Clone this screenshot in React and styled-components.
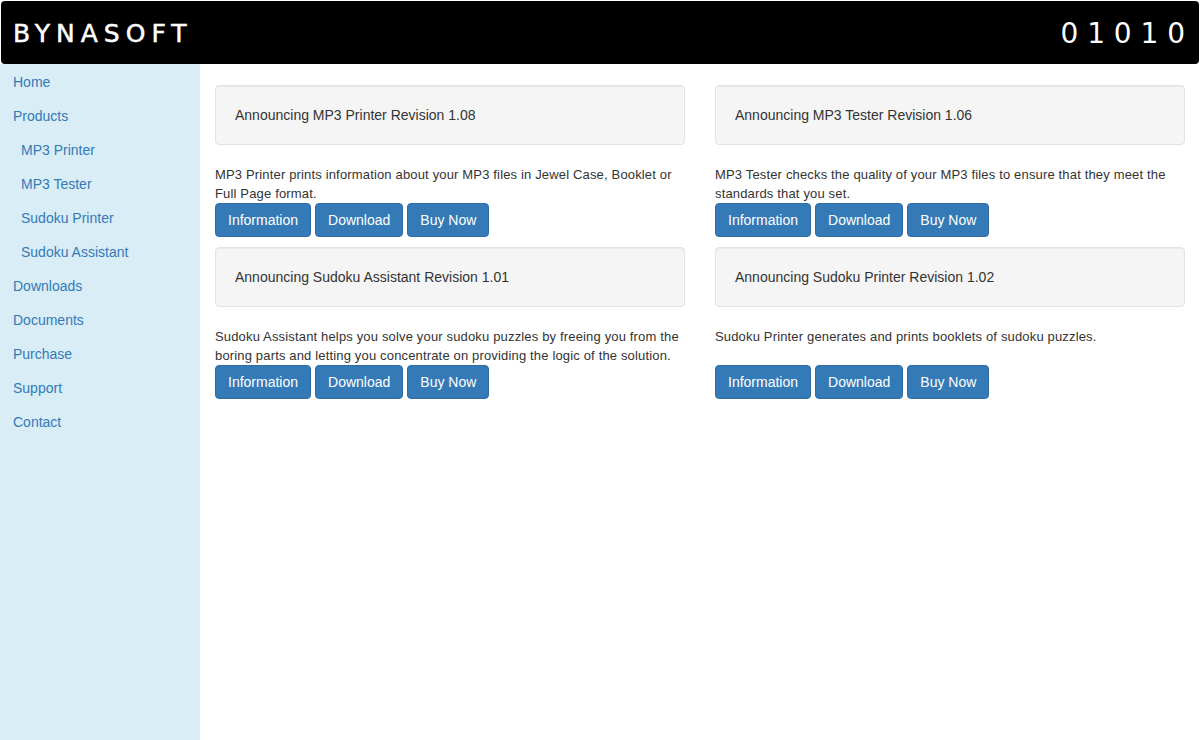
import React from 'react';
import styled, { createGlobalStyle } from 'styled-components';

const GlobalStyle = createGlobalStyle`
  * {
    box-sizing: border-box;
  }
  body {
    margin: 0;
    background-color: #fff;
    color: #333;
    font-family: "Liberation Sans", Arial, sans-serif;
    font-size: 14px;
    line-height: 20px;
  }
`;

const Page = styled.div`
  display: flex;
  flex-direction: column;
  height: 740px;
  overflow: hidden;
`;

const Banner = styled.header`
  display: flex;
  justify-content: space-between;
  align-items: center;
  flex: none;
  height: 63px;
  margin: 1px 1px 0;
  padding: 2px 14px 0 12px;
  background-color: #000;
  border-radius: 4px;
  color: #fff;
`;

const Logo = styled.div`
  font-family: "DejaVu Sans", sans-serif;
  font-size: 25px;
  line-height: 30px;
  letter-spacing: 6px;
  -webkit-text-stroke: 0.5px #fff;
`;

const Binary = styled.div`
  font-family: "DejaVu Sans", sans-serif;
  font-size: 28px;
  line-height: 30px;
  letter-spacing: 8.9px;
  margin-right: -9px;
`;

const Body = styled.div`
  display: flex;
  flex: 1;
  min-height: 0;
`;

const Sidebar = styled.nav`
  flex: none;
  width: 200px;
  background-color: #d9edf7;
  display: flex;
  flex-direction: column;
  padding-top: 1px;
`;

const NavLink = styled.a`
  display: block;
  height: 34px;
  padding: 7px 0 7px ${props => (props.$sub ? '21px' : '13px')};
  color: #337ab7;
  text-decoration: none;
`;

const Content = styled.main`
  flex: 1;
  display: grid;
  grid-template-columns: 470px 470px;
  column-gap: 30px;
  grid-auto-rows: 162px;
  align-content: start;
  padding: 21px 0 0 15px;
`;

const Card = styled.section`
  display: flex;
  flex-direction: column;
`;

const Well = styled.div`
  height: 60px;
  padding: 19px;
  margin-bottom: 19px;
  background-color: #f5f5f5;
  border: 1px solid #e3e3e3;
  border-radius: 4px;
  box-shadow: inset 0 1px 1px rgba(0, 0, 0, 0.05);
`;

const Blurb = styled.p`
  height: 39px;
  margin: 0;
  padding-top: 0.5px;
  font-size: 13px;
  line-height: 19.5px;
  letter-spacing: 0.16px;
  color: #333;
`;

const Actions = styled.div`
  position: relative;
  display: flex;
  gap: 4px;
`;

const Button = styled.a`
  display: block;
  height: 34px;
  padding: 6px 12px;
  background-color: #337ab7;
  border: 1px solid #2e6da4;
  border-radius: 4px;
  color: #fff;
  text-decoration: none;
`;

const navItems = [
  { label: 'Home' },
  { label: 'Products' },
  { label: 'MP3 Printer', sub: true },
  { label: 'MP3 Tester', sub: true },
  { label: 'Sudoku Printer', sub: true },
  { label: 'Sudoku Assistant', sub: true },
  { label: 'Downloads' },
  { label: 'Documents' },
  { label: 'Purchase' },
  { label: 'Support' },
  { label: 'Contact' },
];

const announcements = [
  {
    title: 'Announcing MP3 Printer Revision 1.08',
    text: 'MP3 Printer prints information about your MP3 files in Jewel Case, Booklet or Full Page format.',
  },
  {
    title: 'Announcing MP3 Tester Revision 1.06',
    text: 'MP3 Tester checks the quality of your MP3 files to ensure that they meet the standards that you set.',
  },
  {
    title: 'Announcing Sudoku Assistant Revision 1.01',
    text: 'Sudoku Assistant helps you solve your sudoku puzzles by freeing you from the boring parts and letting you concentrate on providing the logic of the solution.',
  },
  {
    title: 'Announcing Sudoku Printer Revision 1.02',
    text: 'Sudoku Printer generates and prints booklets of sudoku puzzles.',
  },
];

export default function App() {
  return (
    <>
      <GlobalStyle />
      <Page>
        <Banner>
          <Logo>BYNASOFT</Logo>
          <Binary>01010</Binary>
        </Banner>
        <Body>
          <Sidebar>
            {navItems.map(item => (
              <NavLink key={item.label} href="#" $sub={item.sub}>
                {item.label}
              </NavLink>
            ))}
          </Sidebar>
          <Content>
            {announcements.map(item => (
              <Card key={item.title}>
                <Well>{item.title}</Well>
                <Blurb>{item.text}</Blurb>
                <Actions>
                  <Button href="#">Information</Button>
                  <Button href="#">Download</Button>
                  <Button href="#">Buy Now</Button>
                </Actions>
              </Card>
            ))}
          </Content>
        </Body>
      </Page>
    </>
  );
}
